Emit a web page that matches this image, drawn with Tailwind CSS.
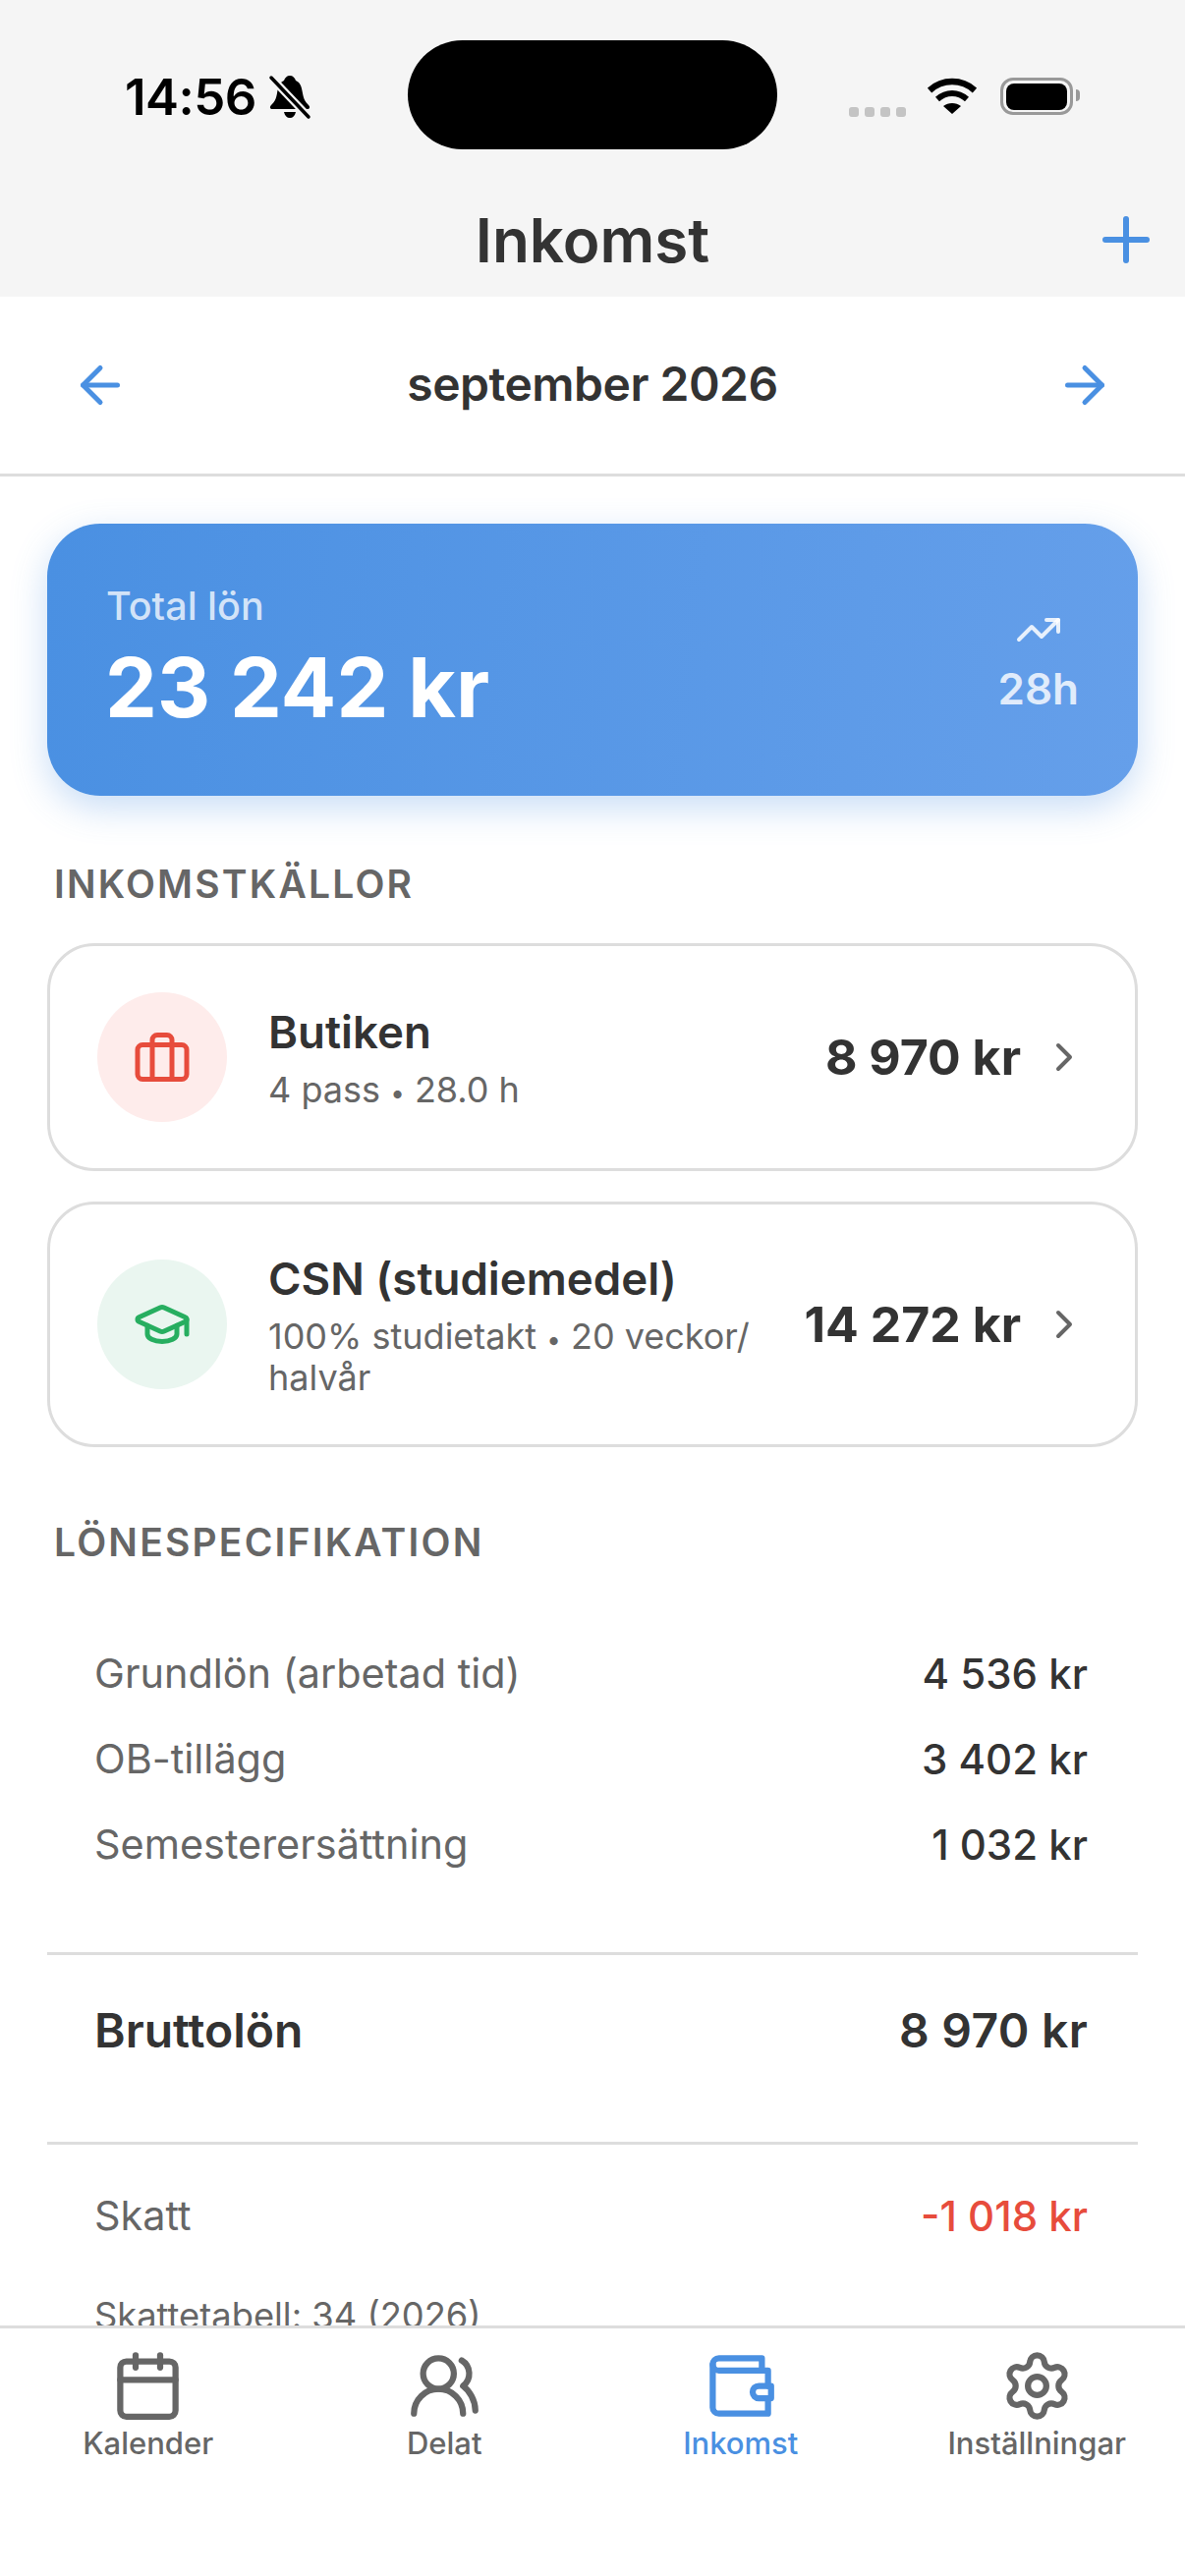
<!doctype html>
<html lang="sv">
<head>
<meta charset="utf-8">
<script src="https://cdn.jsdelivr.net/npm/@tailwindcss/browser@4"></script>
</head>
<body class="m-0 bg-white">
<div class="relative flex h-[2622px] w-[1206px] flex-col overflow-hidden bg-white font-['Inter',sans-serif] text-[#333333]">
  <!-- Header -->
  <header class="relative h-[302px] shrink-0 bg-[#f5f5f5]">
    <div class="absolute left-[415px] top-[41px] h-[111px] w-[376px] rounded-[56px] bg-black"></div>
    <div class="flex h-[192px] items-start pl-[127px] pt-[70px] pr-[114px]">
      <span class="text-[51px] leading-[58px] font-semibold tracking-[-0.5px] text-black">14:56</span>
      <svg class="ml-[12px] mt-[6px]" width="44" height="46" viewBox="0 0 44 46" fill="black"><path d="M22 1c3 0 5 2 6 5 5 2 6 7 7 13 1 6 3 9 6 12 2 2 1 4-1 4H4c-2 0-3-2-1-4 3-3 5-6 6-12 1-6 2-11 7-13 1-3 3-5 6-5z"/><path d="M16 38h12c-1 4-3 6-6 6s-5-2-6-6z"/><path d="M3 3l38 40" stroke="#f5f5f5" stroke-width="8"/><path d="M3 3l38 40" stroke="black" stroke-width="3.5" stroke-linecap="round"/></svg>
      <div class="ml-auto flex items-end pt-[9px]">
        <div class="-mb-[2px] flex gap-[6px]"><i class="block h-[10px] w-[10px] rounded-[3px] bg-[#c4c4c4]"></i><i class="block h-[10px] w-[10px] rounded-[3px] bg-[#c4c4c4]"></i><i class="block h-[10px] w-[10px] rounded-[3px] bg-[#c4c4c4]"></i><i class="block h-[10px] w-[10px] rounded-[3px] bg-[#c4c4c4]"></i></div>
        <svg class="ml-[22px]" width="50" height="38" viewBox="0 0 50 38" fill="none" stroke="black"><path d="M2 13C15 1 35 1 48 13" stroke-width="6.5"/><path d="M10 22c9-8 21-8 30 0" stroke-width="6"/><path d="M25 37l-9-8c5-4 13-4 18 0z" fill="black" stroke="none"/></svg>
        <div class="relative ml-[24px] flex h-[38px] w-[74px] items-center justify-center rounded-[13px] border-[3px] border-[#999999]"><div class="h-[27px] w-[62px] rounded-[8px] bg-black"></div><div class="absolute -right-[10px] top-[9px] h-[12px] w-[4px] rounded-r-[4px] bg-[#999999]"></div></div>
      </div>
    </div>
    <div class="relative flex h-[110px] items-start justify-center">
      <h1 class="text-[62px] leading-[106px] font-semibold">Inkomst</h1>
      <svg class="absolute right-[24px] top-[16px]" width="72" height="72" viewBox="0 0 24 24" fill="none" stroke="#4a90e2" stroke-width="2" stroke-linecap="round" stroke-linejoin="round"><path d="M5 12h14"/><path d="M12 5v14"/></svg>
    </div>
  </header>

  <!-- Month selector -->
  <nav class="flex h-[183px] shrink-0 items-center justify-between border-b-[3px] border-[#dddddd] px-[72px]">
    <svg width="60" height="60" viewBox="0 0 24 24" fill="none" stroke="#4a90e2" stroke-width="2" stroke-linecap="round" stroke-linejoin="round"><path d="m12 19-7-7 7-7"/><path d="M19 12H5"/></svg>
    <span class="-mt-[2px] text-[48px] leading-[60px] font-semibold tracking-[-0.5px]">september 2026</span>
    <svg width="60" height="60" viewBox="0 0 24 24" fill="none" stroke="#4a90e2" stroke-width="2" stroke-linecap="round" stroke-linejoin="round"><path d="M5 12h14"/><path d="m12 5 7 7-7 7"/></svg>
  </nav>

  <!-- Scroll content -->
  <main class="min-h-0 flex-1 overflow-hidden px-[48px] pt-[48px]">
    <section class="flex h-[277px] items-center justify-between rounded-[54px] bg-[linear-gradient(95deg,#4a90e2,#659fea)] px-[60px] shadow-[0_12px_36px_rgba(74,144,226,0.3)]">
      <div>
        <div class="-mt-[2px] text-[39.5px] leading-[50px] font-medium text-white/75">Total lön</div>
        <div class="mt-[8px] text-[84px] leading-[100px] font-bold text-white -ml-[1px]">23 242 kr</div>
      </div>
      <div class="flex flex-col items-center">
        <svg width="48" height="48" viewBox="0 0 24 24" fill="none" stroke="#ffffff" stroke-opacity="0.85" stroke-width="2" stroke-linecap="round" stroke-linejoin="round"><path d="M16 7h6v6"/><path d="m22 7-8.5 8.5-5-5L2 17"/></svg>
        <div class="mt-[11px] text-[44px] leading-[50px] font-semibold text-white/80">28h</div>
      </div>
    </section>

    <h2 class="mt-[60px] mb-[30px] flex h-[60px] items-center pl-[7px] text-[39px] font-semibold tracking-[2.2px] text-[#666666]">INKOMSTKÄLLOR</h2>

    <article class="flex h-[232px] items-center rounded-[48px] border-[3px] border-[#dddddd] bg-white px-[48px]">
      <div class="flex h-[132px] w-[132px] shrink-0 items-center justify-center rounded-full bg-[#feeceb]">
        <svg width="60" height="60" viewBox="0 0 24 24" fill="none" stroke="#e74c3c" stroke-width="2" stroke-linecap="round" stroke-linejoin="round"><rect x="2" y="7" width="20" height="14" rx="2"/><path d="M16 21V5a2 2 0 0 0-2-2h-4a2 2 0 0 0-2 2v16"/></svg>
      </div>
      <div class="ml-[42px] min-w-0 flex-1">
        <div class="text-[45.6px] leading-[58px] font-semibold">Butiken</div>
        <div class="mt-[8px] text-[36px] leading-[42px] text-[#666666]">4 pass <span class="text-[26px] leading-none">•</span> 28.0 h</div>
      </div>
      <div class="ml-[24px] text-[50px] leading-[58px] font-bold">8 970 kr</div>
      <svg class="ml-[20px]" width="48" height="48" viewBox="0 0 24 24" fill="none" stroke="#666666" stroke-width="2" stroke-linecap="round" stroke-linejoin="round"><path d="m9 18 6-6-6-6"/></svg>
    </article>

    <article class="mt-[31px] flex h-[250px] items-center rounded-[48px] border-[3px] border-[#dddddd] bg-white px-[48px]">
      <div class="flex h-[132px] w-[132px] shrink-0 items-center justify-center rounded-full bg-[#eaf6f0]">
        <svg width="60" height="60" viewBox="0 0 24 24" fill="none" stroke="#27ae60" stroke-width="2" stroke-linecap="round" stroke-linejoin="round"><path d="M21.42 10.922a1 1 0 0 0-.019-1.838L12.83 5.18a2 2 0 0 0-1.66 0L2.6 9.08a1 1 0 0 0 0 1.832l8.57 3.908a2 2 0 0 0 1.66 0z"/><path d="M22 10v6"/><path d="M6 12.5V16a6 3 0 0 0 12 0v-3.5"/></svg>
      </div>
      <div class="ml-[42px] min-w-0 flex-1">
        <div class="text-[45.6px] leading-[58px] font-semibold">CSN (studiemedel)</div>
        <div class="mt-[8px] text-[36px] leading-[42px] text-[#666666]">100% studietakt <span class="text-[26px] leading-none">•</span> 20 veckor/ halvår</div>
      </div>
      <div class="ml-[24px] shrink-0 text-[50px] leading-[58px] font-bold">14 272 kr</div>
      <svg class="ml-[20px] shrink-0" width="48" height="48" viewBox="0 0 24 24" fill="none" stroke="#666666" stroke-width="2" stroke-linecap="round" stroke-linejoin="round"><path d="m9 18 6-6-6-6"/></svg>
    </article>

    <h2 class="mt-[67px] flex h-[60px] items-center pl-[7px] text-[39px] font-semibold tracking-[2.2px] text-[#666666]">LÖNESPECIFIKATION</h2>

    <div class="mt-[60px] pl-[48px] pr-[51px] text-[41.4px]">
      <div class="flex h-[87px] items-center justify-between"><span class="text-[#666666]">Grundlön (arbetad tid)</span><span class="text-[42px] font-medium">4 536 kr</span></div>
      <div class="flex h-[87px] items-center justify-between"><span class="text-[#666666]">OB-tillägg</span><span class="text-[42px] font-medium">3 402 kr</span></div>
      <div class="flex h-[87px] items-center justify-between"><span class="text-[#666666]">Semesterersättning</span><span class="text-[42px] font-medium">1 032 kr</span></div>
    </div>
    <div class="mt-[66px] flex h-[196px] items-start justify-between border-y-[3px] border-[#dddddd] pl-[48px] pr-[51px] pt-[48px]">
      <span class="text-[48px] leading-[58px] font-semibold">Bruttolön</span><span class="text-[48px] leading-[58px] font-semibold tracking-[0.3px]">8 970 kr</span>
    </div>
    <div class="mt-[29px] flex h-[87px] items-center justify-between pl-[48px] pr-[51px] text-[41.4px]"><span class="text-[#666666]">Skatt</span><span class="text-[42px] font-medium text-[#e74c3c]">-1 018 kr</span></div>
    <div class="mt-[36px] pl-[48px] text-[36.3px] leading-[44px] text-[#666666]">Skattetabell: 34 (2026)</div>
  </main>

  <!-- Tab bar -->
  <footer class="grid h-[255px] shrink-0 grid-cols-4 items-start border-t-[3px] border-[#dddddd] bg-white pt-[21px] text-[31px] font-medium text-[#666666]">
    <div class="flex flex-col items-center"><svg width="75" height="75" viewBox="0 0 24 24" fill="none" stroke="currentColor" stroke-width="2" stroke-linecap="round" stroke-linejoin="round"><path d="M8 2v4"/><path d="M16 2v4"/><rect x="3" y="4" width="18" height="18" rx="2"/><path d="M3 10h18"/></svg><span class="mt-[1px] leading-[40px]">Kalender</span></div>
    <div class="flex flex-col items-center"><svg width="75" height="75" viewBox="0 0 24 24" fill="none" stroke="currentColor" stroke-width="2" stroke-linecap="round" stroke-linejoin="round"><path d="M18 21a8 8 0 0 0-16 0"/><circle cx="10" cy="8" r="5"/><path d="M22 20c0-3.37-2-6.5-4-8a5 5 0 0 0-.45-8.3"/></svg><span class="mt-[1px] leading-[40px]">Delat</span></div>
    <div class="flex flex-col items-center text-[#4a90e2]"><svg width="75" height="75" viewBox="0 0 24 24" fill="none" stroke="currentColor" stroke-width="2" stroke-linecap="round" stroke-linejoin="round"><path d="M21 12V7H5a2 2 0 0 1 0-4h14v4"/><path d="M3 5v14a2 2 0 0 0 2 2h16v-5"/><path d="M18 12a2 2 0 0 0 0 4h4v-4Z"/></svg><span class="mt-[1px] leading-[40px]">Inkomst</span></div>
    <div class="flex flex-col items-center"><svg width="75" height="75" viewBox="0 0 24 24" fill="none" stroke="currentColor" stroke-width="2" stroke-linecap="round" stroke-linejoin="round"><path d="M9.671 4.136a2.34 2.34 0 0 1 4.659 0 2.34 2.34 0 0 0 3.319 1.915 2.34 2.34 0 0 1 2.33 4.033 2.34 2.34 0 0 0 0 3.831 2.34 2.34 0 0 1-2.33 4.033 2.34 2.34 0 0 0-3.319 1.915 2.34 2.34 0 0 1-4.659 0 2.34 2.34 0 0 0-3.32-1.915 2.34 2.34 0 0 1-2.33-4.033 2.34 2.34 0 0 0 0-3.831A2.34 2.34 0 0 1 6.35 6.051a2.34 2.34 0 0 0 3.319-1.915"/><circle cx="12" cy="12" r="3"/></svg><span class="mt-[1px] leading-[40px]">Inställningar</span></div>
  </footer>
</div>
</body>
</html>
